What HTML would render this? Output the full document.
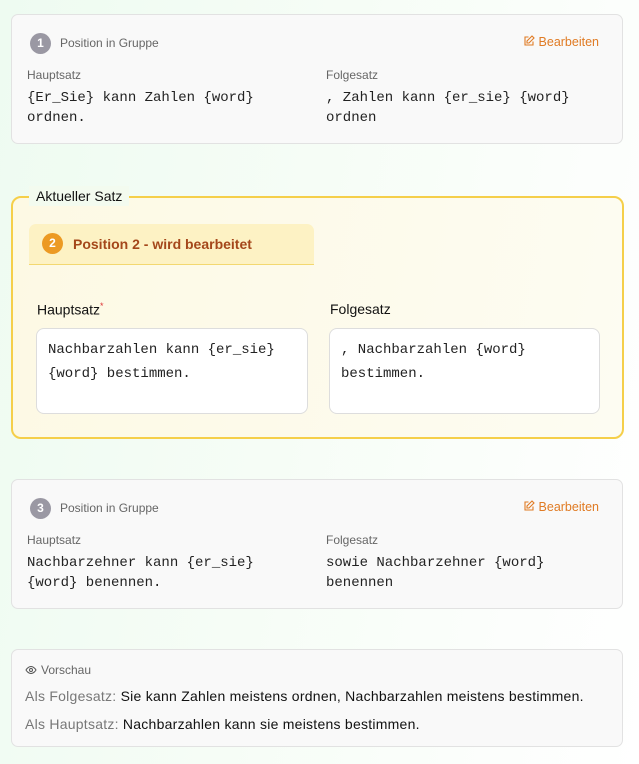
<!DOCTYPE html>
<html><head><meta charset="utf-8"><style>
*{box-sizing:border-box;margin:0;padding:0}
body{width:639px;height:764px;overflow:hidden;position:relative;font-family:"Liberation Sans",sans-serif;background:linear-gradient(100deg,#eefbf1 0%,#f6fdf6 45%,#ffffff 100%)}
.abs{position:absolute}
.card{position:absolute;left:11px;width:612px;background:#f9f9f9;border:1px solid #e2e2e2;border-radius:7px}
.badge{position:absolute;width:21px;height:21px;border-radius:50%;color:#fff;font-size:12px;font-weight:bold;text-align:center;line-height:21px}
.small{font-size:12px;color:#666}
.mono{font-family:"Liberation Mono","DejaVu Sans Mono",monospace;font-size:14px;line-height:20px;color:#222;white-space:nowrap}
.edit{position:absolute;right:23px;font-size:12.5px;color:#e07b24}
.ta{position:absolute;background:#fff;border:1px solid #ddd;border-radius:8px;padding:9px 11px;font-family:"Liberation Mono","DejaVu Sans Mono",monospace;font-size:14px;line-height:24px;color:#222;white-space:nowrap}
.pv{position:absolute;left:13px;font-size:14px;color:#111;white-space:nowrap;letter-spacing:0.25px}
</style></head><body>

<div class="card" style="top:14px;height:130px">
  <div class="badge" style="left:18px;top:18px;background:#9a98a3">1</div>
  <div class="abs small" style="left:48px;top:21px">Position in Gruppe</div>
  <div class="edit" style="top:20px"><svg width="12" height="12" viewBox="0 0 24 24" fill="none" stroke="#e07b24" stroke-width="2.2" style="vertical-align:-1px;margin-right:4px"><path d="M11 4H4v16h16v-7"/><path d="M18 2l4 4-10 10H8v-4z"/></svg>Bearbeiten</div>
  <div class="abs small" style="left:15px;top:53px">Hauptsatz</div>
  <div class="abs mono" style="left:15px;top:73px">{Er_Sie} kann Zahlen {word}<br>ordnen.</div>
  <div class="abs small" style="left:314px;top:53px">Folgesatz</div>
  <div class="abs mono" style="left:314px;top:73px">, Zahlen kann {er_sie} {word}<br>ordnen</div>
</div>

<div class="abs" style="left:11px;top:196px;width:613px;height:243px;border:2px solid #f5cf4a;border-radius:10px;background:linear-gradient(100deg,#fdf9e4,#fdfcf2)"></div>
<div class="abs" style="left:29px;top:186px;padding:0 7px;font-size:14px;color:#111;background:#f3fbef;line-height:20px">Aktueller Satz</div>
<div class="abs" style="left:29px;top:224px;width:285px;height:41px;background:#fdf2c4;border-bottom:1px solid #f3d870;border-radius:7px 7px 0 0"></div>
<div class="badge" style="left:42px;top:233px;background:#ec9a23">2</div>
<div class="abs" style="left:73px;top:236px;font-size:14px;font-weight:bold;color:#a4471a">Position 2 - wird bearbeitet</div>
<div class="abs" style="left:37px;top:301px;font-size:14px;color:#111">Hauptsatz<sup style="color:#d33;font-size:9px">*</sup></div>
<div class="abs" style="left:330px;top:301px;font-size:14px;color:#111">Folgesatz</div>
<div class="ta" style="left:36px;top:328px;width:272px;height:86px">Nachbarzahlen kann {er_sie}<br>{word} bestimmen.</div>
<div class="ta" style="left:329px;top:328px;width:271px;height:86px">, Nachbarzahlen {word}<br>bestimmen.</div>

<div class="card" style="top:479px;height:130px">
  <div class="badge" style="left:18px;top:18px;background:#9a98a3">3</div>
  <div class="abs small" style="left:48px;top:21px">Position in Gruppe</div>
  <div class="edit" style="top:20px"><svg width="12" height="12" viewBox="0 0 24 24" fill="none" stroke="#e07b24" stroke-width="2.2" style="vertical-align:-1px;margin-right:4px"><path d="M11 4H4v16h16v-7"/><path d="M18 2l4 4-10 10H8v-4z"/></svg>Bearbeiten</div>
  <div class="abs small" style="left:15px;top:53px">Hauptsatz</div>
  <div class="abs mono" style="left:15px;top:73px">Nachbarzehner kann {er_sie}<br>{word} benennen.</div>
  <div class="abs small" style="left:314px;top:53px">Folgesatz</div>
  <div class="abs mono" style="left:314px;top:73px">sowie Nachbarzehner {word}<br>benennen</div>
</div>

<div class="card" style="top:649px;height:98px">
  <div class="abs small" style="left:13px;top:13px"><svg width="12" height="12" viewBox="0 0 24 24" fill="none" stroke="#555" stroke-width="2" style="vertical-align:-2px;margin-right:4px"><path d="M2 12s4-7 10-7 10 7 10 7-4 7-10 7S2 12 2 12z"/><circle cx="12" cy="12" r="3"/></svg>Vorschau</div>
  <div class="pv" style="top:38px"><span style="color:#777">Als Folgesatz:</span> Sie kann Zahlen meistens ordnen, Nachbarzahlen meistens bestimmen.</div>
  <div class="pv" style="top:66px"><span style="color:#777">Als Hauptsatz:</span> Nachbarzahlen kann sie meistens bestimmen.</div>
</div>
</body></html>
